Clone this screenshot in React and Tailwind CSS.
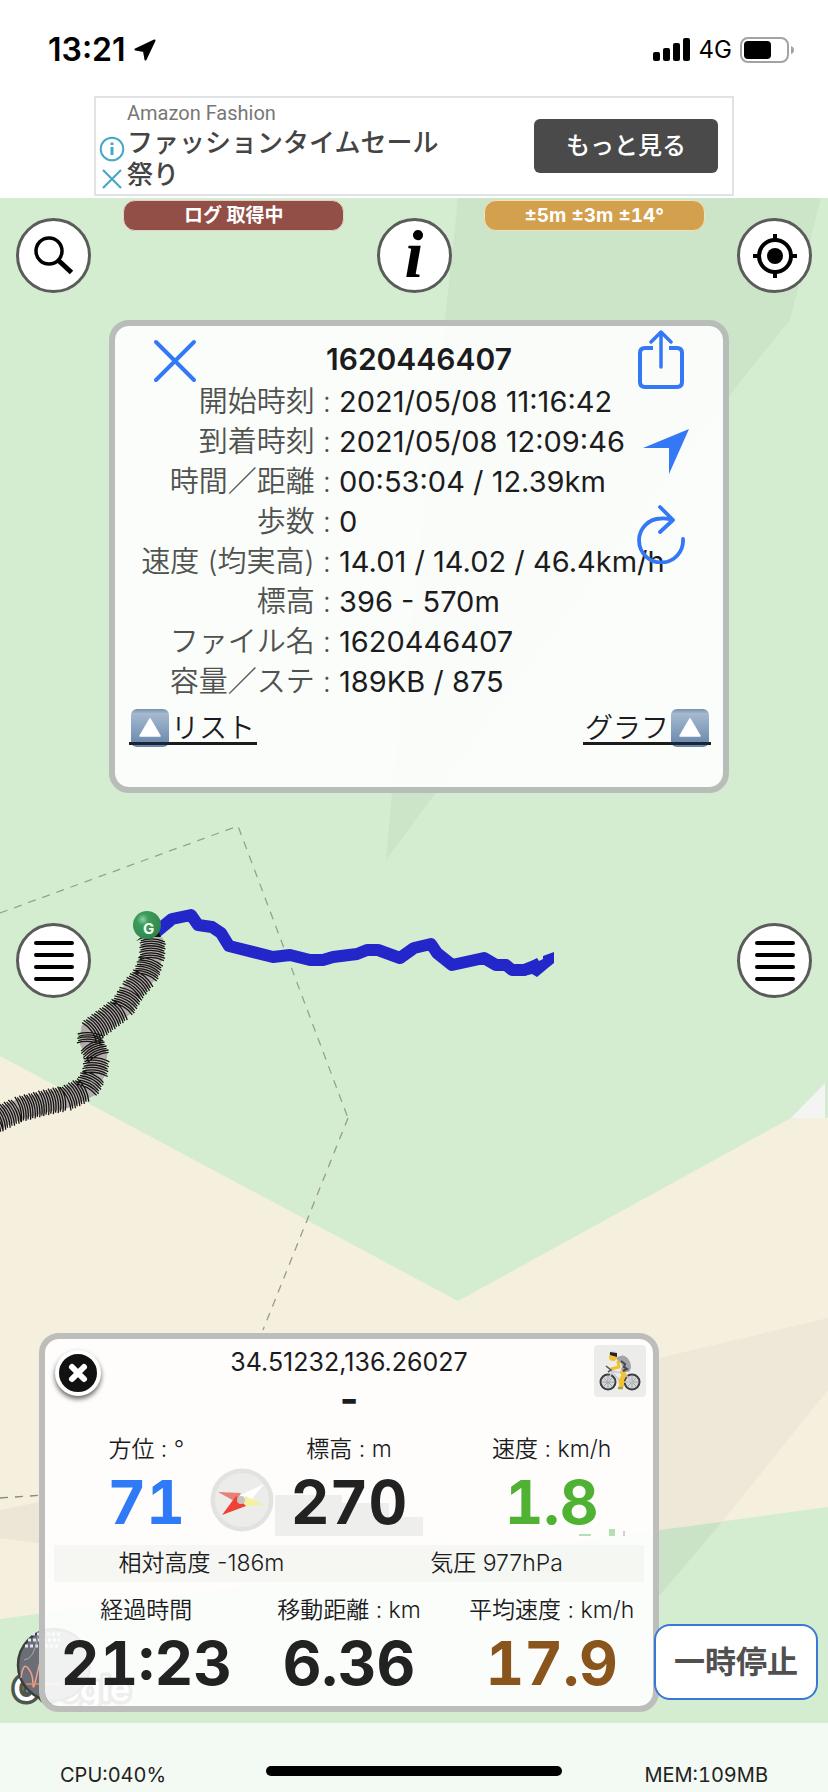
import React from "react";

const trackPoints = [
  [-8, 1123], [0, 1118], [20, 1109], [43, 1103], [67, 1098], [87, 1088], [95, 1073], [97, 1056],
  [90, 1042], [91, 1031], [107, 1019], [123, 1007], [133, 990], [146, 975], [152, 958], [153, 937],
];

function buildTicks() {
  const ticks = [];
  let n = 0;
  for (let i = 0; i < trackPoints.length - 1; i++) {
    const [x1, y1] = trackPoints[i];
    const [x2, y2] = trackPoints[i + 1];
    const len = Math.hypot(x2 - x1, y2 - y1);
    const steps = Math.max(1, Math.round(len / 2.4));
    const ux = (x2 - x1) / len;
    const uy = (y2 - y1) / len;
    for (let s = 0; s < steps; s++) {
      const x = x1 + ((x2 - x1) * s) / steps;
      const y = y1 + ((y2 - y1) * s) / steps;
      const w = 12 + (n % 2);
      ticks.push(
        `M${(x - uy * w - ux * 2).toFixed(1)} ${(y + ux * w - uy * 2).toFixed(1)}Q${(x + ux * 3).toFixed(1)} ${(y + uy * 3).toFixed(1)} ${(x + uy * w - ux * 2).toFixed(1)} ${(y - ux * w - uy * 2).toFixed(1)}`
      );
      n++;
    }
  }
  return ticks.join("");
}

const ticks = buildTicks();
const trackLine = trackPoints.map((p) => p.join(",")).join(" ");

function MapBackground() {
  return (
    <svg aria-hidden="true" className="absolute inset-0 h-full w-full" viewBox="0 198 828 1525" preserveAspectRatio="xMidYMin slice">
      <defs>
        <radialGradient id="pin" cx="0.35" cy="0.3" r="0.8">
          <stop offset="0" stopColor="#8fd0a3" />
          <stop offset="0.25" stopColor="#3f9c5c" />
          <stop offset="1" stopColor="#2b8148" />
        </radialGradient>
      </defs>
      <rect y="198" width="828" height="1525" fill="#d4edd0" />
      <polygon points="458,198 821,198 790,320 740,382 386,860 393,780 446,310" fill="#cce5c9" />
      <polygon points="0,1056 458,1301 791,1118 828,1118 828,1507 659,1530 0,1619" fill="#f5efdd" />
      <polygon points="659,1358 828,1318 828,1390 722,1522 659,1530" fill="#eee8d9" />
      <polygon points="722,1522 659,1596 659,1530" fill="#cae3c7" />
      <path d="M0 1510L39 1502V1543L0 1538Z" fill="#ece6d7" />
      <polygon points="791,1118 825,1083 825,1118" fill="#f4f4f4" />
      <g fill="none" stroke="#8fa58d" strokeWidth="1.3" strokeDasharray="8 7">
        <polyline points="0,913 238,826 348,1118" />
        <polyline points="348,1118 263,1330" stroke="#9b9a8d" />
        <polyline points="0,1498 45,1495" stroke="#8c8a7d" />
      </g>
      <polyline
        points="155,933 172,919 191,915 198,925 212,927 221,933 229,946 273,957 290,955 310,960 323,960 333,957 357,954 367,950 378,950 400,958 414,948 431,944 437,953 452,965 484,958 496,965 506,965 512,970 524,970 537,965"
        fill="none" stroke="#2326c8" strokeWidth="12" strokeLinejoin="round"
      />
      <path d="M526 964L537 958L539 961L543 959V956L554 952V963L549 967L537 977L532 974L524 976Z" fill="#2326c8" />
      <polyline points={trackLine} fill="none" stroke="#b0adab" strokeWidth="20" />
      <path d={ticks} fill="none" stroke="#151211" strokeWidth="1.3" />
      <path d="M136 941L148 932L158 930L161 937L146 937Z" fill="#111" />
      <circle cx="147" cy="925" r="14" fill="url(#pin)" />
      <text x="143" y="934" fontSize="15" fontWeight="700" fill="#f1fff1" fontFamily="Inter, sans-serif">G</text>
      <text
        x="13" y="1701" fontSize="34" fontWeight="600" fontFamily="Inter, sans-serif"
        fill="#fff" stroke="#4d564c" strokeWidth="7" paintOrder="stroke" strokeLinejoin="round"
      >
        Google
      </text>
      <circle cx="54" cy="1665" r="36" fill="#6b6e75" stroke="#3c403d" strokeWidth="2.5" />
      <path d="M28 1640H60M25 1646H60M32 1634H60" stroke="#dfe4f5" strokeWidth="3" strokeDasharray="3 2" />
      <path d="M21 1678Q23 1662 28 1668T33 1684T38 1670T42 1686" fill="none" stroke="#eaa192" strokeWidth="1.5" />
      <path d="M26 1684H60" stroke="#e88b62" strokeWidth="1.5" />
      <path d="M24 1660Q34 1660 38 1636" fill="none" stroke="#a7abb0" />
    </svg>
  );
}

function RoundButton({ label, className = "", children }) {
  return (
    <button
      type="button" aria-label={label}
      className={`flex size-[75px] shrink-0 items-center justify-center rounded-full border-3 border-[#5a5c5a] bg-white text-black ${className}`}
    >
      {children}
    </button>
  );
}

function Bars() {
  return (
    <svg width="42" height="42" viewBox="0 0 42 42" stroke="currentColor" strokeWidth="4" strokeLinecap="round" aria-hidden="true">
      <path d="M3 3H39M3 15H39M3 27H39M3 39H39" />
    </svg>
  );
}

function StatusBar() {
  return (
    <header className="flex h-24 items-center justify-between pt-1 pr-[34px] pl-12 text-black">
      <div className="flex items-center gap-2">
        <span className="text-[32px] font-semibold">13:21</span>
        <svg width="22" height="22" viewBox="0 0 22 22" aria-hidden="true">
          <path d="M20.5 1.5L1.5 10.5L10 12L11.500 20.500Z" fill="#000" stroke="#000" strokeWidth="2" strokeLinejoin="round" />
        </svg>
      </div>
      <div className="flex items-center gap-2">
        <svg width="38" height="24" viewBox="0 0 38 24" aria-hidden="true">
          <rect x="0" y="14" width="7" height="9" rx="2" />
          <rect x="10" y="10" width="7" height="13" rx="2" />
          <rect x="20" y="5" width="7" height="18" rx="2" />
          <rect x="30" y="0" width="7" height="23" rx="2" />
        </svg>
        <span className="text-2xl">4G</span>
        <svg width="54" height="26" viewBox="0 0 54 26" aria-hidden="true">
          <rect x="1" y="1" width="47" height="24" rx="7" fill="none" stroke="#a3a3a3" strokeWidth="2" />
          <rect x="4" y="4" width="27" height="18" rx="4" />
          <path d="M51 9Q54 10 54 13T51 17Z" fill="#a3a3a3" />
        </svg>
      </div>
    </header>
  );
}

function AdBanner() {
  return (
    <aside className="mx-auto mb-[2px] flex h-[100px] w-[640px] max-w-full items-center border-2 border-[#e0e3e6] bg-white pr-[14px]">
      <div className="flex w-[31px] flex-col items-center gap-1 self-end pb-[2px]">
        <a href="#ad-info" aria-label="広告情報">
          <svg width="26" height="26" viewBox="0 0 26 26" fill="none" stroke="#46a7c8" aria-hidden="true">
            <circle cx="13" cy="13" r="11.3" strokeWidth="2" />
            <path d="M13 11V19M13 6.5V9" strokeWidth="3" />
          </svg>
        </a>
        <button type="button" aria-label="広告を閉じる">
          <svg width="26" height="26" viewBox="0 0 26 26" stroke="#46a7c8" strokeWidth="2.2" aria-hidden="true">
            <path d="M4 4L22 22M22 4L4 22" />
          </svg>
        </button>
      </div>
      <div className="flex-1 pb-[2px]">
        <p className="font-['Roboto','Noto_Sans_CJK_JP',sans-serif] text-xl leading-[28px] text-[#777]">Amazon Fashion</p>
        <p className="w-80 text-[26px] leading-8 font-medium text-[#444]">ファッションタイムセール祭り</p>
      </div>
      <button type="button" className="h-[54px] w-[184px] rounded-md bg-[#4a4a4a] text-2xl font-medium text-white">もっと見る</button>
    </aside>
  );
}

function UpBox() {
  return (
    <svg width="38" height="38" viewBox="0 0 38 38" aria-hidden="true">
      <defs>
        <linearGradient id="upbox" x1="0" y1="0" x2="0" y2="1">
          <stop offset="0" stopColor="#7690ae" />
          <stop offset="0.12" stopColor="#a5b9cf" />
          <stop offset="1" stopColor="#6585aa" />
        </linearGradient>
      </defs>
      <rect width="38" height="38" rx="6" fill="url(#upbox)" />
      <path d="M19 10L29 27H9Z" fill="#fff" stroke="#fff" strokeWidth="1.5" strokeLinejoin="round" />
      <path d="M0 34.500H38" stroke="#1c2535" strokeWidth="3" />
    </svg>
  );
}

const details = [
  ["開始時刻", "2021/05/08 11:16:42"],
  ["到着時刻", "2021/05/08 12:09:46"],
  ["時間／距離", "00:53:04 / 12.39km"],
  ["歩数", "0"],
  ["速度 (均実高)", "14.01 / 14.02 / 46.4km/h"],
  ["標高", "396 - 570m"],
  ["ファイル名", "1620446407"],
  ["容量／ステ", "189KB / 875"],
];

function DetailCard() {
  return (
    <section className="relative w-[620px] max-w-full rounded-[20px] border-[6px] border-[#b9bdb9] bg-white/90 bg-clip-padding pt-[13px] pb-[42px] text-[#1c1c1e]">
      <h1 className="mb-[3px] text-center text-[30px] leading-10 font-semibold">1620446407</h1>
      <dl className="text-[29px] leading-10">
        {details.map(([label, value]) => (
          <div key={label} className="flex gap-2">
            <dt className="w-[216px] shrink-0 text-right font-[350] whitespace-nowrap text-[#505250]">{label} :</dt>
            <dd className="whitespace-nowrap">{value}</dd>
          </div>
        ))}
      </dl>
      <div className="mt-[7px] flex justify-between px-3 pl-[14px] text-[28px] leading-[38px] font-[350]">
        <a href="#list" className="flex h-9 items-start gap-0.5 border-b-[3px] border-[#1c1c1e] px-[2px]">
          <UpBox />リスト
        </a>
        <a href="#graph" className="flex h-9 items-start gap-0.5 border-b-[3px] border-[#1c1c1e] px-[2px]">
          グラフ<UpBox />
        </a>
      </div>
      <button type="button" aria-label="閉じる" className="absolute top-[13px] left-[38px] text-[#3478f6]">
        <svg width="44" height="44" viewBox="0 0 44 44" stroke="currentColor" strokeWidth="4" strokeLinecap="round" aria-hidden="true">
          <path d="M3 3L41 41M41 3L3 41" />
        </svg>
      </button>
      <div className="absolute top-1 right-[34px] flex w-[52px] flex-col text-[#3478f6]">
        <button type="button" aria-label="共有">
          <svg width="48" height="60" viewBox="0 0 48 60" fill="none" stroke="currentColor" strokeWidth="4" strokeLinecap="round" strokeLinejoin="round" aria-hidden="true">
            <path d="M24 37V2M14 12L24 2L34 12" strokeWidth="3.5" />
            <path d="M16 18H8Q3 18 3 23V52Q3 57 8 57H40Q45 57 45 52V23Q45 18 40 18H32" strokeLinecap="butt" />
          </svg>
        </button>
        <button type="button" aria-label="ナビ" className="mt-[38px] self-end">
          <svg width="46" height="47" viewBox="0 0 46 47" fill="currentColor" aria-hidden="true">
            <path d="M46 1L0 20H26V46Z" />
          </svg>
        </button>
        <button type="button" aria-label="更新" className="mt-[29px]">
          <svg width="48" height="60" viewBox="0 0 48 60" fill="none" stroke="currentColor" strokeWidth="3.8" strokeLinecap="round" strokeLinejoin="round" aria-hidden="true">
            <path d="M46 35A22 22 0 1 1 24 14.5Q30 14 36 16M23 3L36 16L23 28" />
          </svg>
        </button>
      </div>
    </section>
  );
}

function Cyclist() {
  return (
    <svg width="44" height="44" viewBox="0 0 44 44" fill="none" aria-hidden="true">
      <g stroke="#3b3d40" strokeWidth="2">
        <circle cx="10" cy="33" r="7.5" fill="#d6d7d9" />
        <circle cx="34" cy="33" r="7.5" fill="#d6d7d9" />
      </g>
      <path d="M3 33H17M10 26V40M5 28L15 38M15 28L5 38M27 33H41M34 26V40M29 28L39 38M39 28L29 38" stroke="#8b8d91" strokeWidth="0.7" />
      <path d="M10 33L14 22L27 25L34 33H23L14 23M23 33L27 24" stroke="#c8cbd0" strokeWidth="1.6" />
      <path d="M24 21L26 26L23 32L24 38" stroke="#f2c230" strokeWidth="5" strokeLinejoin="round" />
      <path d="M20 39H25" stroke="#a9a13a" strokeWidth="2.5" />
      <path d="M18 9Q26 3 31 11Q35 18 31 23L25 23L23 20Q26 15 20 12Z" fill="#a3a5a8" />
      <path d="M23 12L27 15L26 18L29 20L25 22" stroke="#46484c" strokeWidth="2" />
      <path d="M20 12L21 18L13 20" stroke="#f2c230" strokeWidth="3.2" strokeLinejoin="round" />
      <path d="M8 17L13 21L10 23" stroke="#55585c" strokeWidth="1.6" />
      <circle cx="15" cy="8" r="4" fill="#f2c230" />
      <path d="M10 5Q14 -1 19 3L19 7Q14 5 10 5Z" fill="#dcdee1" />
      <path d="M12 3L19 4V8L12 6Z" fill="#242528" />
    </svg>
  );
}

function Compass() {
  return (
    <svg width="64" height="64" viewBox="0 0 64 64" aria-hidden="true">
      <circle cx="32" cy="32" r="31.5" fill="#e2e3e1" />
      <circle cx="32" cy="32" r="27" fill="#ececeb" />
      <path d="M54 16L29 28L37 37Z" fill="#fff" />
      <path d="M54 37L35 28L35 38Z" fill="#f4f19a" />
      <path d="M8 24L31 25L26 34Z" fill="#e88077" />
      <path d="M12 47L26 28L36 38Z" fill="#ee4236" />
      <circle cx="31" cy="32" r="4" fill="#c9c4c2" />
    </svg>
  );
}

function Metric({ label, value, color = "text-[#222]" }) {
  return (
    <div className="flex flex-col items-center whitespace-nowrap">
      <span className="text-[23px] leading-8 font-[350]">{label}</span>
      <span className={`text-[60px] leading-[74px] font-bold tabular-nums ${color}`}>{value}</span>
    </div>
  );
}

function RidePanel() {
  return (
    <section className="relative flex-1 rounded-[20px] border-[6px] border-[#bdbdbb] bg-white/90 bg-clip-padding pt-2 pb-[6px] text-[#1c1c1e]">
      <p className="text-center text-[25px] leading-[30px]">34.51232,136.26027</p>
      <p className="text-center text-[40px] leading-[44px] font-bold">-</p>
      <div className="relative mt-3 mb-[6px] grid grid-cols-3">
        <svg className="absolute top-[62px] left-[230px]" width="390" height="41" viewBox="0 0 390 41" aria-hidden="true">
          <path d="M0 0H67V8H114V22H148V41H0Z" fill="#eeeeec" />
          <path d="M304 39H316V41H304ZM334 34H340V41H334Z" fill="#b4dfb2" />
          <path d="M348 36H350V41H348Z" fill="#d8c8dc" />
        </svg>
        <div className="relative"><Metric label="方位 : °" value="71" color="text-[#2f7af6]" /></div>
        <div className="relative"><Metric label="標高 : m" value="270" /></div>
        <div className="relative"><Metric label="速度 : km/h" value="1.8" color="text-[#4fb233]" /></div>
        <div className="absolute top-[35px] left-[165px]"><Compass /></div>
      </div>
      <div className="mx-[9px] grid h-[37px] grid-cols-2 items-center bg-[#f2f3f0]/70 text-center text-[23px] font-[350]">
        <span>相対高度 -186m</span>
        <span>気圧 977hPa</span>
      </div>
      <div className="mt-3 grid grid-cols-3">
        <Metric label="経過時間" value="21:23" />
        <Metric label="移動距離 : km" value="6.36" />
        <Metric label="平均速度 : km/h" value="17.9" color="text-[#8a541d]" />
      </div>
      <button type="button" aria-label="パネルを閉じる" className="absolute top-[11px] left-[10px] flex size-[46px] items-center justify-center rounded-full border-4 border-white bg-[#111] shadow-[0_3px_5px_rgba(0,0,0,0.6)]">
        <svg width="22" height="22" viewBox="0 0 22 22" stroke="#fff" strokeWidth="6" strokeLinecap="round" aria-hidden="true">
          <path d="M5 5L17 17M17 5L5 17" />
        </svg>
      </button>
      <button type="button" aria-label="自転車" className="absolute top-[6px] right-[7px] flex size-[52px] items-center justify-center rounded bg-[#ececeb]">
        <Cyclist />
      </button>
    </section>
  );
}

export default function App() {
  return (
    <div className="flex min-h-screen flex-col bg-white font-['Inter','Noto_Sans_CJK_JP',sans-serif]">
      <StatusBar />
      <AdBanner />
      <main className="relative flex flex-1 flex-col overflow-hidden">
        <MapBackground />
        <div className="relative flex flex-1 flex-col">
          <div className="flex items-start justify-between px-4 pt-[2px]">
            <RoundButton label="検索" className="mt-[18px]">
              <svg width="44" height="44" viewBox="0 0 44 44" fill="none" stroke="currentColor" aria-hidden="true">
                <circle cx="17" cy="17" r="13" strokeWidth="3.5" />
                <path d="M26 26L39.500 38.500" strokeWidth="5" />
              </svg>
            </RoundButton>
            <div className="h-[31px] w-[221px] rounded-xl border border-[#e6d0c4] bg-[#924f47] text-center text-[19px] leading-[29px] font-bold text-white">ログ 取得中</div>
            <RoundButton label="情報" className="mt-[18px]">
              <span className="pb-1 font-['Liberation_Serif',serif] text-[68px] leading-[64px] font-bold italic">i</span>
            </RoundButton>
            <div className="h-[31px] w-[221px] rounded-xl border border-[#f3e0b8] bg-[#d3a04d] text-center text-[19px] leading-[29px] font-bold text-white tabular-nums">±5m ±3m ±14°</div>
            <RoundButton label="現在地" className="mt-[18px]">
              <svg width="44" height="44" viewBox="0 0 44 44" fill="none" stroke="currentColor" strokeWidth="4" aria-hidden="true">
                <circle cx="22" cy="22" r="16" />
                <circle cx="22" cy="22" r="8" fill="currentColor" stroke="none" />
                <path d="M22 0V8M22 36V44M0 22H8M36 22H44" />
              </svg>
            </RoundButton>
          </div>
          <div className="mt-[27px] flex justify-center pl-[10px]">
            <DetailCard />
          </div>
          <div className="mt-[130px] flex justify-between px-4">
            <RoundButton label="左メニュー"><Bars /></RoundButton>
            <RoundButton label="右メニュー"><Bars /></RoundButton>
          </div>
          <div className="mt-auto flex items-end pr-[10px] pb-[11px] pl-[39px]">
            <RidePanel />
            <button type="button" className="relative mb-3 -ml-[5px] h-[76px] w-[164px] rounded-2xl border-2 border-[#3a78d8] bg-white text-[31px] font-bold text-[#505050]">一時停止</button>
          </div>
        </div>
      </main>
      <footer className="grid h-[69px] grid-cols-[1fr_296px_1fr] items-end bg-[#f3faf3] pb-[5px] text-xl leading-6 text-[#222] tabular-nums">
        <span className="pl-[60px]">CPU:040%</span>
        <span className="mb-[11px] h-[10px] rounded-full bg-black" />
        <span className="pr-[60px] text-right">MEM:109MB</span>
      </footer>
    </div>
  );
}
